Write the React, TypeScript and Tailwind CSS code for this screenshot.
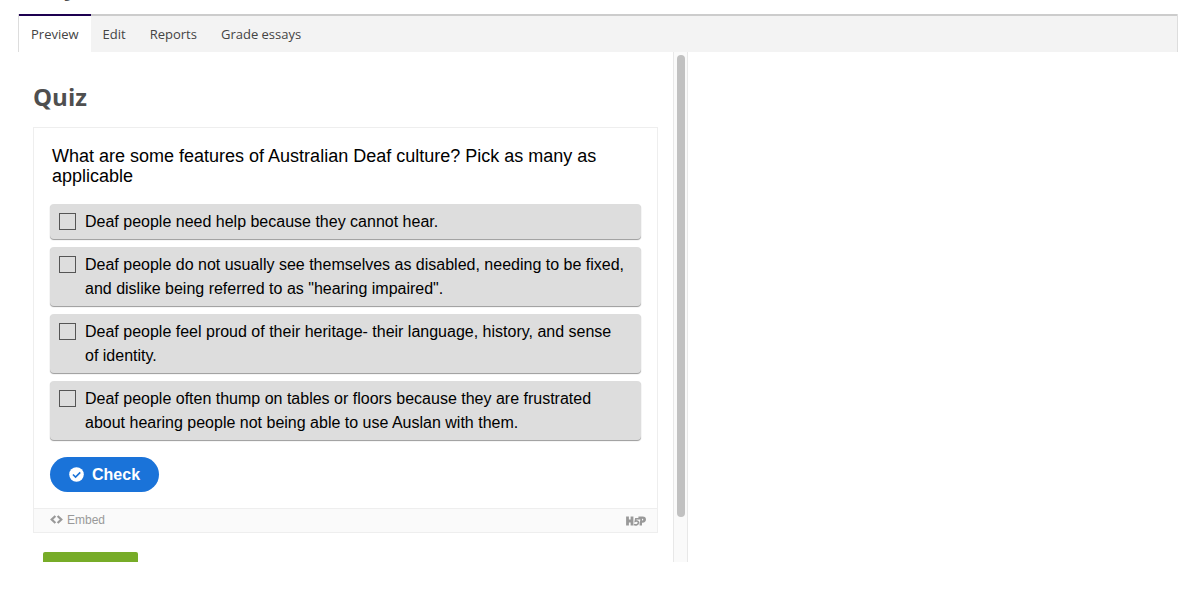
import React, { useState } from 'react';

const tabs = ['Preview', 'Edit', 'Reports', 'Grade essays'];

const answers = [
  'Deaf people need help because they cannot hear.',
  'Deaf people do not usually see themselves as disabled, needing to be fixed, and dislike being referred to as "hearing impaired".',
  'Deaf people feel proud of their heritage- their language, history, and sense of identity.',
  'Deaf people often thump on tables or floors because they are frustrated about hearing people not being able to use Auslan with them.',
];

const TabBar: React.FC = () => {
  const [active, setActive] = useState('Preview');

  return (
    <nav className="flex h-[38px] border-r border-l border-[#ddd] bg-[#f3f3f3]">
      {tabs.map((tab) => (
        <button
          key={tab}
          onClick={() => setActive(tab)}
          className={`border-t-2 px-3 pt-[2px] text-[13px] text-[#444] ${
            active === tab ? 'border-[#1d0050] bg-white' : 'border-[#ccc]'
          }`}
        >
          {tab}
        </button>
      ))}
      <div className="flex-1 border-t-2 border-[#ccc]" />
    </nav>
  );
};

const Answer: React.FC<{ text: string }> = ({ text }) => (
  <label className="flex gap-[9px] rounded-[4px] bg-[#ddd] pt-[6px] pr-[14px] pb-[5px] pl-[9px] text-base leading-6 text-black shadow-[0_1px_1px_#999]">
    <input
      type="checkbox"
      className="mt-[3px] h-[17px] w-[17px] shrink-0 appearance-none border border-[#555] checked:bg-[#1a73d9]"
    />
    <span>{text}</span>
  </label>
);

const QuizCard: React.FC = () => (
  <section className="border border-[#eee] font-['Liberation_Sans',Arial,sans-serif]">
    <div className="px-4 pt-[18px] pb-4">
      <p className="px-[2px] text-lg leading-5 text-black">
        What are some features of Australian Deaf culture? Pick as many as applicable
      </p>
      <div className="mt-[18px] flex flex-col gap-2">
        {answers.map((text) => (
          <Answer key={text} text={text} />
        ))}
      </div>
      <button className="mt-[17px] flex h-[35px] items-center gap-2 rounded-full bg-[#1a73d9] px-[19px] text-base font-bold text-white">
        <svg viewBox="0 0 16 16" className="h-[15px] w-[15px]" aria-hidden="true">
          <circle cx="8" cy="8" r="7.8" fill="#fff" />
          <path d="M4.2 8l2.8 2.8 5-5" fill="none" stroke="#1a73d9" strokeWidth="1.7" />
        </svg>
        Check
      </button>
    </div>

    <footer className="flex h-6 items-center justify-between border-t border-[#eee] bg-[#fafafa] pr-[11px] pl-4 text-[#999]">
      <a href="#embed" className="flex items-center gap-1 pb-[2px] text-xs">
        <svg viewBox="0 0 13 9" className="h-[9px] w-[13px]" aria-hidden="true">
          <path d="M5.4 1L1.7 4.5l3.7 3.5M7.6 1l3.7 3.5L7.6 8" fill="none" stroke="currentColor" strokeWidth="2.2" />
        </svg>
        Embed
      </a>
      <a href="#h5p" aria-label="H5P">
        <svg viewBox="0 0 20 10" className="h-[10px] w-5" aria-hidden="true">
          <path d="M1.5 .6V9.6M6 .6V9.6M1.5 5H6" fill="none" stroke="#999" strokeWidth="2.8" />
          <path
            d="M13.6 2.8H9.8L9.3 5.3C11.4 4.5 12.6 5.4 12.4 6.9C12.2 8.6 10 9.3 7.8 8.5"
            fill="none"
            stroke="#999"
            strokeWidth="1.6"
          />
          <path
            d="M12.4 .6H16.6C18.9 .6 20 1.8 20 3.6C20 5.6 18.7 6.8 16.6 6.8H16V9.6H13.6V6.6L14.2 4.8V3.2H12.4ZM16 2.8V4.6H16.5C17.5 4.6 17.5 2.8 16.5 2.8Z"
            fill="#999"
            fillRule="evenodd"
          />
        </svg>
      </a>
    </footer>
  </section>
);

export default function App() {
  return (
    <div className="h-screen overflow-hidden bg-white pr-[23px] pl-[18px] font-['Open_Sans',sans-serif]">
      <header className="flex h-[14px] items-start overflow-hidden pl-[46px]">
        <h1 className="-mt-8 text-2xl leading-9 font-bold text-[#4c4c4c]">y</h1>
      </header>
      <TabBar />
      <main className="flex h-[calc(100vh-88px)] max-w-[670px]">
        <div className="min-w-0 flex-1 overflow-hidden px-[15px] pt-[27px]">
          <h2 className="mb-3 text-2xl leading-9 font-bold text-[#4f4f4f]">Quiz</h2>
          <QuizCard />
          <button
            aria-label="Continue"
            className="mt-[19px] ml-[10px] block h-9 w-[95px] rounded-[2px] bg-[#77ac28]"
          />
        </div>
        {/* scroll track */}
        <div className="flex w-[15px] flex-col items-center border-r border-l border-[#e8e8e8] bg-[#fafafa] pt-[3px] pb-[45px]">
          <div className="w-2 flex-1 rounded-full bg-[#c1c1c1]" />
        </div>
      </main>
    </div>
  );
}
